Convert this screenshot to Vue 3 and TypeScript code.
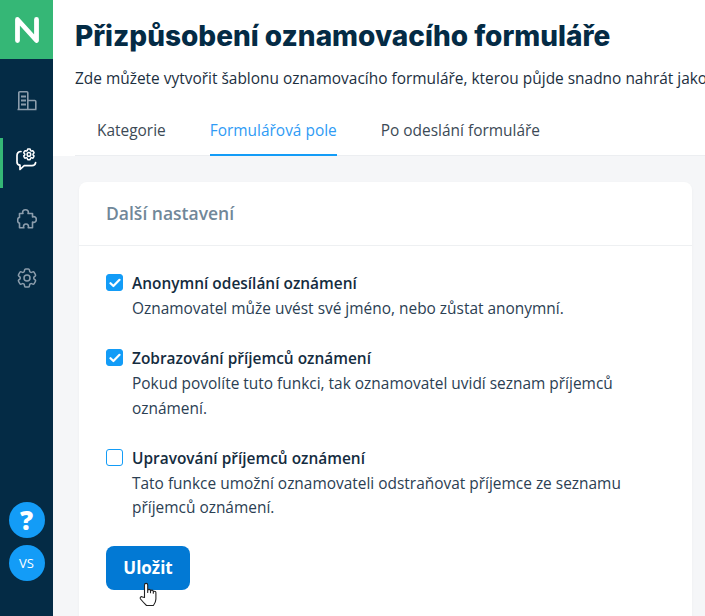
<template>
  <div class="layout">
    <aside class="sidebar">
      <div class="logo">
        <svg width="24" height="26" viewBox="0 0 24 26" fill="none" stroke="#fff" stroke-width="4.8" stroke-linecap="round" stroke-linejoin="round"><path d="M2.5 23.5V2.500L21.500 23.500V2.500" /></svg>
      </div>
      <nav class="nav">
        <a class="nav-item">
          <svg width="20" height="20" viewBox="0 0 20 20" fill="none" stroke="#8c9dac" stroke-width="1.6" stroke-linejoin="round"><path d="M1.800 18V1.800a1 1 0 0 1 1-1h7a1 1 0 0 1 1 1V18M10.800 9.500h7a1 1 0 0 1 1 1V18M.5 18.500h19" /><path d="M4 5.500h5M4 9.500h5M4 13.500h5" stroke-width="1.800" /></svg>
        </a>
        <a class="nav-item active">
          <svg width="21" height="23" viewBox="0 0 21 23" fill="none" stroke="#fff" stroke-width="1.7" stroke-linecap="round" stroke-linejoin="round">
            <path d="M5 3.500C2.500 3.500 1 5 1 7.500v6.500c0 2 1 3 3 3.200v4.300l4.200-3.900H16c2 0 3.300-1.100 3.600-3" />
            <g transform="translate(5.700 -.8) scale(.6)">
              <path stroke-width="2.500" :d="cogPath" />
              <circle stroke-width="2.500" cx="12" cy="12" r="3" />
            </g>
          </svg>
        </a>
        <a class="nav-item">
          <svg width="20" height="20" viewBox="0 0 20 20" fill="none" stroke="#8c9dac" stroke-width="1.6" stroke-linecap="round" stroke-linejoin="round"><path d="M6 4.500C5 2.300 6.500.8 8.500.8S12 2.300 11 4.500H15.500V8C17.800 7 19.300 8.500 19.300 10.500S17.800 14 15.500 13V18.800H11.200C12 16.500 10.800 15 9 15S6 16.500 6.800 18.800H2.500V14C1 14.300.7 12.500.7 11.300S1 8.200 2.500 8.500V4.500Z" /></svg>
        </a>
        <a class="nav-item">
          <svg width="24" height="24" viewBox="0 0 24 24" fill="none" stroke="#8c9dac" stroke-width="1.5" stroke-linecap="round" stroke-linejoin="round"><path :d="cogPath" /><circle cx="12" cy="12" r="3" /></svg>
        </a>
      </nav>
      <div class="side-bottom">
        <div class="round help">?</div>
        <div class="round user">VS</div>
      </div>
    </aside>

    <main class="main">
      <header class="head">
        <h1>Přizpůsobení oznamovacího formuláře</h1>
        <p class="lead">Zde můžete vytvořit šablonu oznamovacího formuláře, kterou půjde snadno nahrát jako výchozí</p>
        <div class="tabs">
          <a v-for="t in tabs" :key="t" class="tab" :class="{ current: t === 'Formulářová pole' }">{{ t }}</a>
        </div>
      </header>

      <section class="content">
        <div class="card">
          <div class="card-title">Další nastavení</div>
          <div class="card-body">
            <div v-for="o in options" :key="o.title" class="option">
              <span class="box" :class="{ on: o.checked }">
                <svg v-if="o.checked" width="12" height="10" viewBox="0 0 12 10" fill="none" stroke="#fff" stroke-width="2.2" stroke-linecap="round" stroke-linejoin="round"><path d="M1.500 5.200 4.400 8 10.500 1.800" /></svg>
              </span>
              <div class="option-text">
                <div class="option-title">{{ o.title }}</div>
                <div class="option-desc">{{ o.desc }}</div>
              </div>
            </div>
            <div class="save-wrap">
              <button class="save">Uložit</button>
              <svg class="cursor" width="22" height="26" viewBox="0 0 22 26" fill="#fff" stroke="#222" stroke-width="1.1" stroke-linejoin="round"><path d="M6.500 15.500V3a1.600 1.600 0 0 1 3.200 0v7.500V8.800a1.400 1.400 0 0 1 2.800 0v2V9.500a1.400 1.400 0 0 1 2.800 0v1.800-.8a1.300 1.300 0 0 1 2.600 0v6.500c0 3-1.300 5-2.500 6.500H8.500C7 22 5 20 2.500 17c-1-1.300.5-3 2-2z" /></svg>
            </div>
          </div>
        </div>
      </section>
    </main>
  </div>
</template>

<script setup lang="ts">
interface Option {
  title: string
  desc: string
  checked: boolean
}

const cogPath =
  'M9.594 3.94c.09-.542.56-.94 1.11-.94h2.593c.55 0 1.02.398 1.11.94l.213 1.281c.063.374.313.686.645.87.074.04.147.083.22.127.325.196.72.257 1.075.124l1.217-.456a1.125 1.125 0 0 1 1.37.49l1.296 2.247a1.125 1.125 0 0 1-.26 1.431l-1.003.827c-.293.241-.438.613-.43.992a7.723 7.723 0 0 1 0 .255c-.008.378.137.75.43.991l1.004.827c.424.35.534.955.26 1.43l-1.298 2.247a1.125 1.125 0 0 1-1.369.491l-1.217-.456c-.355-.133-.75-.072-1.076.124a6.47 6.47 0 0 1-.22.128c-.331.183-.581.495-.644.869l-.213 1.281c-.09.543-.56.94-1.11.94h-2.594c-.55 0-1.019-.398-1.11-.94l-.213-1.281c-.062-.374-.312-.686-.644-.87a6.52 6.52 0 0 1-.22-.127c-.325-.196-.72-.257-1.076-.124l-1.217.456a1.125 1.125 0 0 1-1.369-.49l-1.297-2.247a1.125 1.125 0 0 1 .26-1.431l1.004-.827c.292-.24.437-.613.43-.991a6.932 6.932 0 0 1 0-.255c.007-.38-.138-.751-.43-.992l-1.004-.827a1.125 1.125 0 0 1-.26-1.43l1.297-2.247a1.125 1.125 0 0 1 1.37-.491l1.216.456c.356.133.751.072 1.076-.124.072-.044.146-.086.22-.128.332-.183.582-.495.644-.869l.214-1.28Z'

const tabs: string[] = ['Kategorie', 'Formulářová pole', 'Po odeslání formuláře']

const options: Option[] = [
  {
    title: 'Anonymní odesílání oznámení',
    desc: 'Oznamovatel může uvést své jméno, nebo zůstat anonymní.',
    checked: true,
  },
  {
    title: 'Zobrazování příjemců oznámení',
    desc: 'Pokud povolíte tuto funkci, tak oznamovatel uvidí seznam příjemců oznámení.',
    checked: true,
  },
  {
    title: 'Upravování příjemců oznámení',
    desc: 'Tato funkce umožní oznamovateli odstraňovat příjemce ze seznamu příjemců oznámení.',
    checked: false,
  },
]
</script>

<style>
html,
body {
  margin: 0;
  height: 100%;
  overflow: hidden;
}
</style>

<style scoped>
.layout {
  display: flex;
  width: 705px;
  height: 616px;
  overflow: hidden;
  font-family: 'Open Sans', 'Noto Sans', sans-serif;
  font-size: 15.45px;
  line-height: 24.7px;
  color: #0b2a42;
}
.sidebar {
  flex: 0 0 53px;
  display: flex;
  flex-direction: column;
  background: #042b45;
}
.logo {
  height: 59px;
  display: flex;
  align-items: center;
  justify-content: center;
  background: #35b776;
}
.nav {
  display: flex;
  flex-direction: column;
  gap: 9px;
  padding-top: 20px;
}
.nav-item {
  height: 50px;
  box-sizing: border-box;
  padding-bottom: 7px;
  display: flex;
  align-items: center;
  justify-content: center;
  border-left: 3px solid transparent;
  border-right: 3px solid transparent;
}
.nav-item.active {
  border-left-color: #35b776;
}
.side-bottom {
  margin-top: auto;
  padding-bottom: 35px;
  display: flex;
  flex-direction: column;
  align-items: center;
  gap: 7px;
}
.round {
  width: 36px;
  height: 36px;
  border-radius: 50%;
  background: #139cf7;
  color: #fff;
  display: flex;
  align-items: center;
  justify-content: center;
}
.help {
  font-size: 26px;
  font-weight: 800;
}
.user {
  font-size: 13px;
  font-weight: 500;
}
.main {
  flex: 1;
  min-width: 0;
  display: flex;
  flex-direction: column;
  background: #f5f6f8;
}
.head {
  background: #fff;
  padding: 18px 0 0 22px;
  height: 156px;
  box-sizing: border-box;
}
h1 {
  margin: 0;
  font-family: Inter, 'Open Sans', sans-serif;
  font-size: 28px;
  line-height: 36px;
  font-weight: 800;
  color: #042b45;
  white-space: nowrap;
}
.lead {
  margin: 12px 0 0;
  color: #1c2f3f;
  white-space: nowrap;
}
.tabs {
  display: flex;
  gap: 44px;
  margin-top: 27px;
  padding-left: 22px;
  height: 38.3px;
  box-sizing: border-box;
  border-bottom: 1px solid #eceef1;
}
.tab {
  height: 38.3px;
  box-sizing: border-box;
  color: #3c4a56;
  border-bottom: 2px solid transparent;
}
.tab.current {
  color: #2f9bf5;
  border-bottom-color: #139cf7;
}
.content {
  padding: 26px 13px 0 26px;
}
.card {
  background: #fff;
  border-radius: 8px;
  box-shadow: 0 1px 3px rgba(20, 40, 60, 0.04);
  height: 460px;
}
.card-title {
  height: 64px;
  box-sizing: border-box;
  padding: 0 27px;
  display: flex;
  align-items: center;
  font-size: 17.5px;
  font-weight: 600;
  color: #708799;
  border-bottom: 1px solid #eef0f2;
}
.card-body {
  padding: 25px 27px 0;
}
.option {
  display: flex;
  gap: 9px;
  margin-bottom: 25.7px;
}
.box {
  flex: 0 0 17px;
  width: 17px;
  height: 17px;
  margin-top: 3px;
  box-sizing: border-box;
  border: 1.5px solid #139cf7;
  border-radius: 3px;
  display: flex;
  align-items: center;
  justify-content: center;
}
.box.on {
  background: #139cf7;
}
.option-text {
  flex: 1;
}
.option-title {
  font-weight: 600;
  color: #142c40;
}
.option-desc {
  color: #2b4053;
}
.save-wrap {
  position: relative;
  width: 84px;
}
.save {
  display: block;
  width: 84px;
  height: 44px;
  border: 0;
  border-radius: 8px;
  background: #0279d4;
  color: #fff;
  font-family: inherit;
  font-size: 17px;
  font-weight: 700;
  padding: 0;
}
.cursor {
  position: absolute;
  left: 32px;
  top: 36px;
}
</style>
